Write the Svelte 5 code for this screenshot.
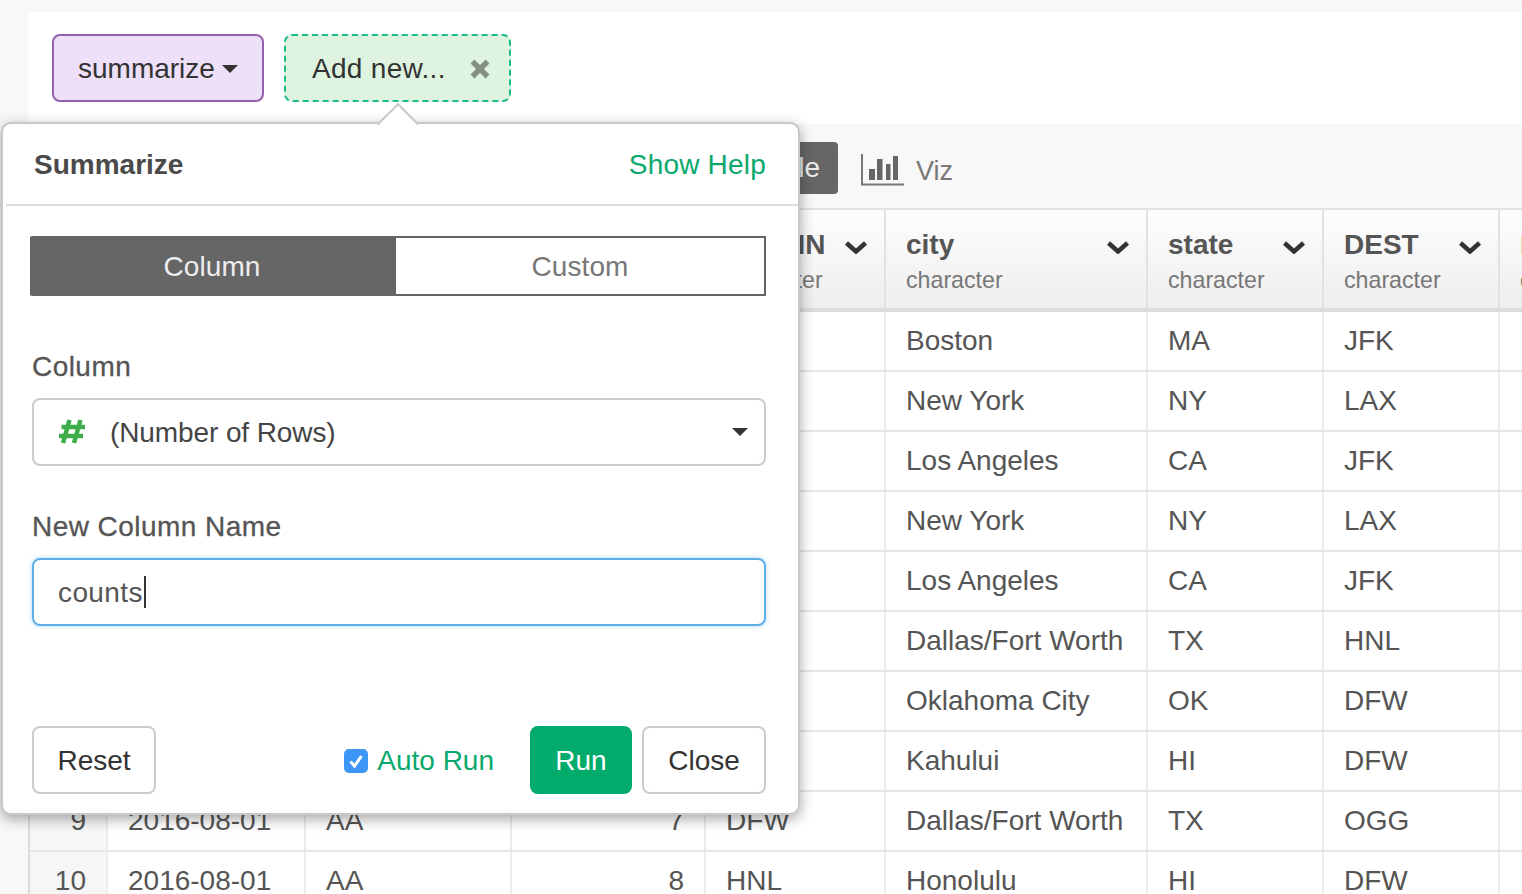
<script>
  const rows = [
    [1, '2016-08-01', 'AA', 1, 'JFK', 'Boston', 'MA', 'JFK'],
    [2, '2016-08-01', 'AA', 2, 'LAX', 'New York', 'NY', 'LAX'],
    [3, '2016-08-01', 'AA', 3, 'JFK', 'Los Angeles', 'CA', 'JFK'],
    [4, '2016-08-01', 'AA', 4, 'LAX', 'New York', 'NY', 'LAX'],
    [5, '2016-08-01', 'AA', 5, 'JFK', 'Los Angeles', 'CA', 'JFK'],
    [6, '2016-08-01', 'AA', 5, 'HNL', 'Dallas/Fort Worth', 'TX', 'HNL'],
    [7, '2016-08-01', 'AA', 6, 'DFW', 'Oklahoma City', 'OK', 'DFW'],
    [8, '2016-08-01', 'AA', 7, 'OGG', 'Kahului', 'HI', 'DFW'],
    [9, '2016-08-01', 'AA', 7, 'DFW', 'Dallas/Fort Worth', 'TX', 'OGG'],
    [10, '2016-08-01', 'AA', 8, 'HNL', 'Honolulu', 'HI', 'DFW']
  ];
  const headers = [
    ['ORIGIN', 'character'],
    ['city', 'character'],
    ['state', 'character'],
    ['DEST', 'character']
  ];
</script>

<div class="page">
  <div class="sheet">
    <div class="steps">
      <div class="token cmd"><span class="tk">summarize</span> <span class="caret dark"></span></div>
      <div class="token add">
        <span class="tk">Add new...</span>
        <svg class="x" viewBox="0 0 20 20" aria-hidden="true"><path d="M2.5 2.5 L17.5 17.5 M17.5 2.5 L2.5 17.5" /></svg>
      </div>
    </div>

    <div class="tabsbar">
      <div class="viewtab active">Table</div>
      <svg class="vizicon" viewBox="0 0 43 32" aria-hidden="true">
        <path class="axis" d="M1 0 V30.5 H43" />
        <path class="bars" d="M8 15 H14 V26 H8 Z M16 5 H21.5 V26 H16 Z M25 10 H29.5 V26 H25 Z M32 2 H37 V26 H32 Z" />
      </svg>
      <span class="viz">Viz</span>
    </div>

    <div class="grid">
      <div class="row head">
        <div class="cell idx"></div>
        <div class="cell"></div>
        <div class="cell"></div>
        <div class="cell"></div>
        {#each headers as h}
          <div class="cell hcell">
            <div class="htext">
              <div class="hname">{h[0]}</div>
              <div class="htype">{h[1]}</div>
            </div>
            <svg class="chev" viewBox="0 0 22 14" aria-hidden="true"><path d="M1.5 3 L11 11.5 L20.5 3" /></svg>
          </div>
        {/each}
        <div class="cell hcell"><div class="htext"><div class="hname">D</div><div class="htype">character</div></div></div>
      </div>
      {#each rows as r}
        <div class="row">
          <div class="cell idx num">{r[0]}</div>
          <div class="cell">{r[1]}</div>
          <div class="cell">{r[2]}</div>
          <div class="cell num">{r[3]}</div>
          <div class="cell">{r[4]}</div>
          <div class="cell">{r[5]}</div>
          <div class="cell">{r[6]}</div>
          <div class="cell">{r[7]}</div>
          <div class="cell"></div>
        </div>
      {/each}
    </div>
  </div>

  <div class="popover">
    <div class="arrow"></div>
    <div class="pophead">
      <div class="poptitle">Summarize</div>
      <div class="help">Show Help</div>
    </div>
    <div class="popbody">
      <div class="seg">
        <div class="segitem on">Column</div>
        <div class="segitem">Custom</div>
      </div>

      <div class="label first">Column</div>
      <div class="select">
        <svg class="hash" viewBox="0 0 28 26" aria-hidden="true">
          <path d="M11.5 1 L5 24 M22.5 1 L16 24 M3.5 8 H27 M1 17 H25" />
        </svg>
        <span class="seltext">(Number of Rows)</span>
        <span class="caret dark sel"></span>
      </div>

      <div class="label second">New Column Name</div>
      <div class="input"><span class="inptext">counts</span><span class="cursor"></span></div>

      <div class="foot">
        <div class="btn">Reset</div>
        <div class="spacer"></div>
        <svg class="check" viewBox="0 0 24 24" aria-hidden="true">
          <rect width="24" height="24" rx="5" />
          <path d="M6.5 12.5 L10.5 17 L17.5 7" />
        </svg>
        <span class="auto">Auto Run</span>
        <div class="btn run">Run</div>
        <div class="btn close">Close</div>
      </div>
    </div>
  </div>
</div>

<style>
  :global(body) {
    margin: 0;
    background: #f8f8f8;
    font-family: "Liberation Sans", Arial, sans-serif;
    overflow: hidden;
  }
  .page {
    position: relative;
    width: 1522px;
    height: 894px;
    overflow: hidden;
    padding: 12px 0 0 28px;
    box-sizing: border-box;
    font-size: 28px;
    color: #555;
  }
  .sheet {
    width: 1494px;
    overflow: hidden;
  }
  .steps {
    background: #fff;
    height: 112px;
    box-sizing: border-box;
    padding: 22px 0 0 24px;
    display: flex;
    gap: 20px;
    align-items: flex-start;
  }
  .token {
    height: 68px;
    box-sizing: border-box;
    border-radius: 8px;
    display: flex;
    align-items: center;
    color: #333;
  }
  .tk {
    padding-top: 2px;
  }
  .cmd {
    width: 212px;
    background: #eee0f8;
    border: 2px solid #9160ae;
    padding-left: 24px;
    gap: 7px;
  }
  .add {
    width: 227px;
    background: #dff3e1;
    border: 2px dashed #1bbc85;
    padding-left: 26px;
    letter-spacing: 0.3px;
  }
  .caret {
    display: inline-block;
    width: 0;
    height: 0;
    border-left: 8px solid transparent;
    border-right: 8px solid transparent;
    border-top: 8px solid #333;
  }
  .cmd .caret {
    margin-top: 2px;
  }
  .x {
    width: 20px;
    height: 20px;
    margin-left: 24px;
    margin-top: 1px;
  }
  .x path {
    fill: none;
    stroke: #859085;
    stroke-width: 5.5;
  }
  .tabsbar {
    height: 84px;
    background: #f8f8f8;
    display: flex;
    align-items: center;
    padding-left: 660px;
    box-sizing: border-box;
  }
  .viewtab {
    width: 150px;
    height: 52px;
    box-sizing: border-box;
    background: #666;
    border-radius: 4px;
    color: #eee;
    line-height: 52px;
    text-align: right;
    padding-right: 18px;
    margin-top: 4px;
  }
  .vizicon {
    width: 43px;
    height: 32px;
    margin-left: 23px;
    margin-top: 8px;
  }
  .axis {
    fill: none;
    stroke: #777;
    stroke-width: 2;
  }
  .bars {
    fill: #666;
  }
  .viz {
    margin-left: 12px;
    color: #777;
    margin-top: 10px;
    font-size: 27px;
  }
  .grid {
    width: 1494px;
    background: #fff;
    border-top: 2px solid #e2e2e2;
    border-left: 2px solid #dcdcdc;
    box-sizing: border-box;
  }
  .row {
    display: grid;
    grid-template-columns: 78px 198px 206px 194px 180px 262px 176px 176px 200px;
    height: 60px;
    box-sizing: border-box;
    border-bottom: 2px solid #e6e6e6;
  }
  .row.head {
    height: 102px;
    background: linear-gradient(#fdfdfd, #eeeeee);
    border-bottom: 4px solid #dcdcdc;
  }
  .cell {
    border-right: 2px solid #ececec;
    box-sizing: border-box;
    padding: 0 20px;
    display: flex;
    align-items: center;
    white-space: nowrap;
    overflow: hidden;
  }
  .head .cell {
    border-right-color: #e2e2e2;
  }
  .idx {
    background: #f6f6f6;
    padding: 0 20px 0 0;
  }
  .head .idx {
    background: transparent;
  }
  .num {
    justify-content: flex-end;
  }
  .hcell {
    justify-content: space-between;
    padding-right: 17px;
    overflow: hidden;
  }
  .htext {
    margin-top: 6px;
  }
  .hname {
    font-weight: 700;
    color: #555;
    line-height: 36px;
  }
  .htype {
    font-size: 23.2px;
    color: #777;
    line-height: 34px;
  }
  .chev {
    width: 22px;
    height: 14px;
    margin-top: -24px;
    flex: none;
  }
  .chev path {
    fill: none;
    stroke: #333;
    stroke-width: 4.5;
  }
  .popover {
    position: absolute;
    left: 1px;
    top: 122px;
    width: 799px;
    height: 693px;
    box-sizing: border-box;
    background: #fff;
    border: 2px solid #c8c8c8;
    border-radius: 10px;
    box-shadow: 0 4px 14px rgba(0, 0, 0, 0.35);
    display: flex;
    flex-direction: column;
  }
  .arrow {
    position: absolute;
    left: 380px;
    top: -15px;
    width: 30px;
    height: 30px;
    background: #fff;
    border-left: 2px solid #c8c8c8;
    border-top: 2px solid #c8c8c8;
    box-sizing: border-box;
    transform: rotate(45deg);
  }
  .pophead {
    position: relative;
    margin-left: 3px;
    padding: 2px 32px 0 28px;
    box-sizing: content-box;
    height: 78px;
    border-bottom: 2px solid #ddd;
    display: flex;
    align-items: center;
    justify-content: space-between;
  }
  .poptitle {
    font-weight: 700;
    color: #4a4a4a;
  }
  .help {
    color: #0aa86c;
    letter-spacing: 0.2px;
  }
  .popbody {
    padding: 30px 32px 0 29px;
    display: flex;
    flex-direction: column;
    flex: 1;
  }
  .seg {
    display: grid;
    grid-template-columns: 366px 370px;
    height: 60px;
    margin-left: -2px;
  }
  .segitem {
    border: 2px solid #666;
    border-left: 0;
    color: #777;
    display: flex;
    align-items: center;
    justify-content: center;
    box-sizing: border-box;
    letter-spacing: 0.1px;
    padding-top: 2px;
  }
  .segitem.on {
    background: #666;
    color: #eee;
    border-radius: 2px 0 0 2px;
  }
  .label {
    color: #555;
    line-height: 32px;
    letter-spacing: 0.45px;
    -webkit-text-stroke: 0.3px #555;
  }
  .label.first {
    margin-top: 55px;
  }
  .label.second {
    margin-top: 45px;
  }
  .select {
    margin-top: 15px;
    height: 68px;
    box-sizing: border-box;
    border: 2px solid #ccc;
    border-radius: 8px;
    display: flex;
    align-items: center;
    padding: 0 0 0 24px;
    color: #444;
  }
  .hash {
    width: 28px;
    height: 26px;
  }
  .hash path {
    fill: none;
    stroke: #3cad4a;
    stroke-width: 4.5;
  }
  .seltext {
    margin-left: 24px;
    flex: 1;
    padding-top: 2px;
    letter-spacing: -0.1px;
  }
  .sel {
    margin-right: 16px;
  }
  .input {
    margin-top: 15px;
    height: 68px;
    box-sizing: border-box;
    border: 2px solid #5eaeea;
    border-radius: 8px;
    box-shadow: 0 0 4px rgba(94, 174, 234, 0.5);
    display: flex;
    align-items: center;
    padding-left: 24px;
    color: #555;
  }
  .inptext {
    letter-spacing: 0.4px;
    padding-top: 2px;
  }
  .cursor {
    width: 2px;
    height: 32px;
    background: #333;
    margin-left: 1px;
  }
  .foot {
    margin-top: 100px;
    display: flex;
    align-items: center;
  }
  .spacer {
    flex: 1;
  }
  .btn {
    height: 68px;
    box-sizing: border-box;
    width: 124px;
    border: 2px solid #ccc;
    border-radius: 8px;
    display: flex;
    align-items: center;
    justify-content: center;
    color: #333;
    padding-top: 2px;
  }
  .check {
    width: 24px;
    height: 24px;
    margin-top: 2px;
  }
  .check rect {
    fill: #3b96f5;
  }
  .check path {
    fill: none;
    stroke: #fff;
    stroke-width: 3;
  }
  .auto {
    color: #0aa86c;
    margin-left: 9px;
    margin-right: 36px;
    padding-top: 2px;
  }
  .run {
    width: 102px;
    background: #00ab6c;
    border-color: #00ab6c;
    color: #fff;
  }
  .close {
    margin-left: 10px;
  }
</style>
